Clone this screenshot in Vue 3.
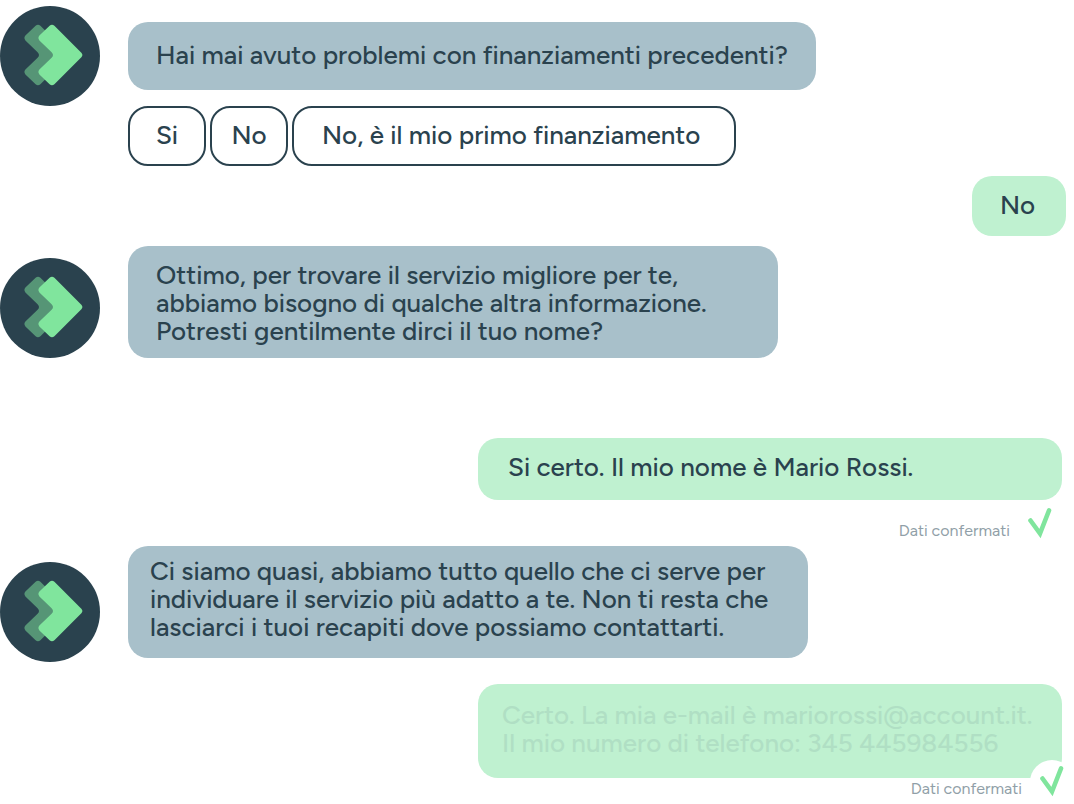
<script setup>
const options = ['Si', 'No', 'No, è il mio primo finanziamento']

const logoPath =
  'M49.6 19.8 Q52 17.8 54.4 19.8 L81.6 47 Q83.4 49 81.6 51 L54.4 78.2 Q52 80.2 49.6 78.2 L39.4 68.4 Q37.4 66 39.4 63.6 L51.6 51.8 Q54.4 49 51.6 46.2 L39.4 34.4 Q37.4 32 39.4 29.6 Z'
</script>

<template>
  <main class="chat">
    <svg class="defs" width="0" height="0" aria-hidden="true">
      <symbol id="logo" viewBox="0 0 100 100">
        <circle cx="50" cy="50" r="50" fill="#2a424e" />
        <path :d="logoPath" transform="translate(-14 0)" fill="#569576" />
        <path :d="logoPath" fill="#80e59d" />
      </symbol>
      <symbol id="check" viewBox="0 0 24 32">
        <path d="M2.5 12.5 L12 25.5 L21 2.5" fill="none" stroke="#80e59d" stroke-width="4.6" stroke-linecap="round" />
      </symbol>
    </svg>

    <div class="bot question">
      <svg class="avatar" role="img" aria-label="Assistente"><use href="#logo" /></svg>
      <p class="bubble">Hai mai avuto problemi con finanziamenti precedenti?</p>
    </div>

    <div class="options">
      <button v-for="option in options" :key="option" type="button">{{ option }}</button>
    </div>

    <p class="bubble user short">No</p>

    <div class="bot name">
      <svg class="avatar" role="img" aria-label="Assistente"><use href="#logo" /></svg>
      <p class="bubble">
        Ottimo, per trovare il servizio migliore per te,<br />
        abbiamo bisogno di qualche altra informazione.<br />
        Potresti gentilmente dirci il tuo nome?
      </p>
    </div>

    <p class="bubble user answer">Si certo. Il mio nome è Mario Rossi.</p>
    <div class="status">
      <span>Dati confermati</span>
      <svg class="check" aria-hidden="true"><use href="#check" /></svg>
    </div>

    <div class="bot contact">
      <svg class="avatar" role="img" aria-label="Assistente"><use href="#logo" /></svg>
      <p class="bubble">
        Ci siamo quasi, abbiamo tutto quello che ci serve per<br />
        individuare il servizio più adatto a te. Non ti resta che<br />
        lasciarci i tuoi recapiti dove possiamo contattarti.
      </p>
    </div>

    <div class="bubble user pending">
      <p>
        Certo. La mia e-mail è mariorossi@account.it.<br />
        Il mio numero di telefono: 345 445984556
      </p>
      <span class="badge"><svg class="check" aria-hidden="true"><use href="#check" /></svg></span>
    </div>
    <p class="status last">Dati confermati</p>
  </main>
</template>

<style>
body {
  margin: 0;
  background: #fff;
}
</style>

<style scoped>
.chat {
  display: flex;
  flex-direction: column;
  padding: 6px 12px 0 0;
  overflow: hidden;
  color: #2a424e;
  font: 500 26px/28px Figtree, Inter, "Liberation Sans", sans-serif;
}
.defs {
  position: absolute;
}
p {
  margin: 0;
}
.bot {
  display: flex;
  gap: 28px;
}
.avatar {
  flex: none;
  width: 100px;
  height: 100px;
}
.bubble {
  box-sizing: border-box;
  max-width: 100%;
  padding: 15px 28px 17px;
  border-radius: 20px;
  background: #a8c0ca;
}
.question {
  align-items: center;
}
.question .bubble {
  width: 688px;
  padding: 19px 0 21px 28px;
}
.options {
  display: flex;
  gap: 4px;
  margin-left: 128px;
}
.options button {
  box-sizing: border-box;
  min-width: 78px;
  height: 60px;
  padding: 0 16px 2px;
  border: 2px solid #2a424e;
  border-radius: 20px;
  background: #fff;
  color: inherit;
  font: inherit;
}
.options button:last-child {
  width: 444px;
  padding-left: 28px;
  text-align: left;
}
.user {
  align-self: flex-end;
  background: #bff1d0;
}
.short {
  min-width: 94px;
  margin: 10px -4px 10px 0;
}
.name {
  align-items: flex-end;
}
.name .bubble {
  width: 650px;
  padding: 15px 28px 13px;
}
.answer {
  width: 584px;
  margin-top: 80px;
  padding: 15px 30px 19px;
}
.status {
  display: flex;
  align-items: flex-end;
  justify-content: flex-end;
  gap: 18px;
  padding: 8px 10px 0 0;
  color: #919fa8;
  font-size: 16px;
  font-weight: 400;
  line-height: 18px;
}
.check {
  width: 24px;
  height: 32px;
}
.contact {
  margin-top: 6px;
}
.contact .avatar {
  margin-top: 16px;
}
.contact .bubble {
  align-self: flex-start;
  width: 680px;
  padding: 11px 22px 17px;
}
.pending {
  position: relative;
  width: 584px;
  margin-top: 22px;
  padding: 17px 24px 21px;
  color: #b0dfc4;
  white-space: nowrap;
}
.badge {
  position: absolute;
  right: -12px;
  bottom: -26px;
  display: flex;
  align-items: center;
  justify-content: center;
  width: 44px;
  height: 44px;
  border-radius: 50%;
  background: #fff;
}
.status.last {
  padding: 2px 40px 0 0;
}
</style>
